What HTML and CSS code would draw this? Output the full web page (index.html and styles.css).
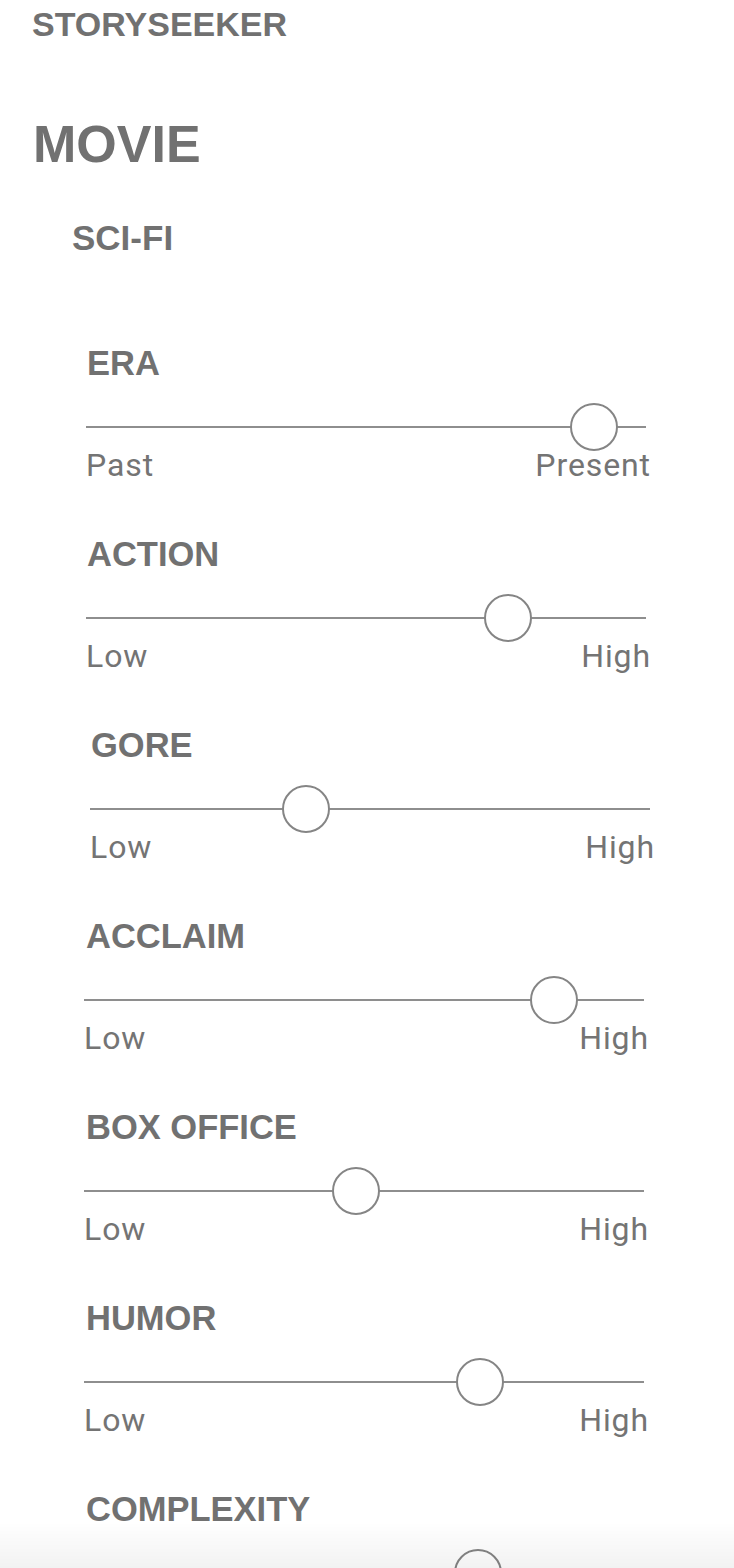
FILE: index.html
```html
<!DOCTYPE html>
<html lang="en">
<head>
<meta charset="utf-8">
<title>StorySeeker</title>
<link rel="stylesheet" href="styles.css">
</head>
<body>
<header class="brand">STORYSEEKER</header>
<main class="page">
  <h1 class="type">MOVIE</h1>
  <h2 class="genre">SCI-FI</h2>
  <div class="filters">
    <section class="filter">
      <h3 class="filter-title">ERA</h3>
      <div class="slider"><div class="track"></div><div class="thumb" style="--v:0.945"></div></div>
      <div class="ends"><span>Past</span><span>Present</span></div>
    </section>
    <section class="filter">
      <h3 class="filter-title">ACTION</h3>
      <div class="slider"><div class="track"></div><div class="thumb" style="--v:0.777"></div></div>
      <div class="ends"><span>Low</span><span>High</span></div>
    </section>
    <section class="filter shift-r">
      <h3 class="filter-title">GORE</h3>
      <div class="slider"><div class="track"></div><div class="thumb" style="--v:0.375"></div></div>
      <div class="ends"><span>Low</span><span>High</span></div>
    </section>
    <section class="filter shift-l">
      <h3 class="filter-title">ACCLAIM</h3>
      <div class="slider"><div class="track"></div><div class="thumb" style="--v:0.871"></div></div>
      <div class="ends"><span>Low</span><span>High</span></div>
    </section>
    <section class="filter shift-l">
      <h3 class="filter-title">BOX OFFICE</h3>
      <div class="slider"><div class="track"></div><div class="thumb" style="--v:0.484"></div></div>
      <div class="ends"><span>Low</span><span>High</span></div>
    </section>
    <section class="filter shift-l">
      <h3 class="filter-title">HUMOR</h3>
      <div class="slider"><div class="track"></div><div class="thumb" style="--v:0.727"></div></div>
      <div class="ends"><span>Low</span><span>High</span></div>
    </section>
    <section class="filter shift-l">
      <h3 class="filter-title">COMPLEXITY</h3>
      <div class="slider"><div class="track"></div><div class="thumb" style="--v:0.723"></div></div>
      <div class="ends"><span>Low</span><span>High</span></div>
    </section>
  </div>
</main>
<div class="fade"></div>
</body>
</html>
```

FILE: styles.css
```css
html, body {
  margin: 0;
  padding: 0;
  background: #ffffff;
}

body {
  font-family: "Liberation Sans", Arial, sans-serif;
  color: #717171;
}

.brand {
  padding: 7px 0 0 32px;
  font-size: 34px;
  line-height: 34px;
  font-weight: 700;
}

.page {
  display: flex;
  flex-direction: column;
}

.type {
  margin: 77px 0 0 33px;
  font-size: 52px;
  line-height: 1;
  font-weight: 700;
}

.genre {
  margin: 50px 0 0 72px;
  font-size: 35px;
  line-height: 1;
  font-weight: 700;
}

.filters {
  display: flex;
  flex-direction: column;
  gap: 59px;
  margin-top: 92px;
  padding-bottom: 80px;
}

.filter {
  display: flex;
  flex-direction: column;
  padding-left: 86px;
}

.filter.shift-r {
  padding-left: 90px;
}

.filter.shift-l {
  padding-left: 84px;
}

.filter-title {
  margin: 0 0 0 1px;
  font-size: 34.5px;
  line-height: 33px;
  font-weight: 700;
}

.shift-l .filter-title {
  margin-left: 2px;
}

.slider {
  position: relative;
  width: 560px;
  height: 48px;
  margin-top: 23px;
  display: flex;
  align-items: center;
}

.track {
  width: 100%;
  height: 2px;
  background: #8e8e8e;
}

.thumb {
  position: absolute;
  top: 0;
  left: calc(var(--v) * (100% - 48px));
  width: 48px;
  height: 48px;
  box-sizing: border-box;
  border: 2px solid #858585;
  border-radius: 50%;
  background: #ffffff;
}

.ends {
  display: flex;
  justify-content: space-between;
  width: 565px;
  font-family: Roboto, "Liberation Sans", sans-serif;
  font-size: 32px;
  line-height: 28px;
  letter-spacing: 0.9px;
  color: #747474;
}

.fade {
  position: fixed;
  left: 0;
  right: 0;
  bottom: 0;
  height: 46px;
  background: linear-gradient(to bottom, rgba(0, 0, 0, 0), rgba(0, 0, 0, 0.05));
  pointer-events: none;
}
```
